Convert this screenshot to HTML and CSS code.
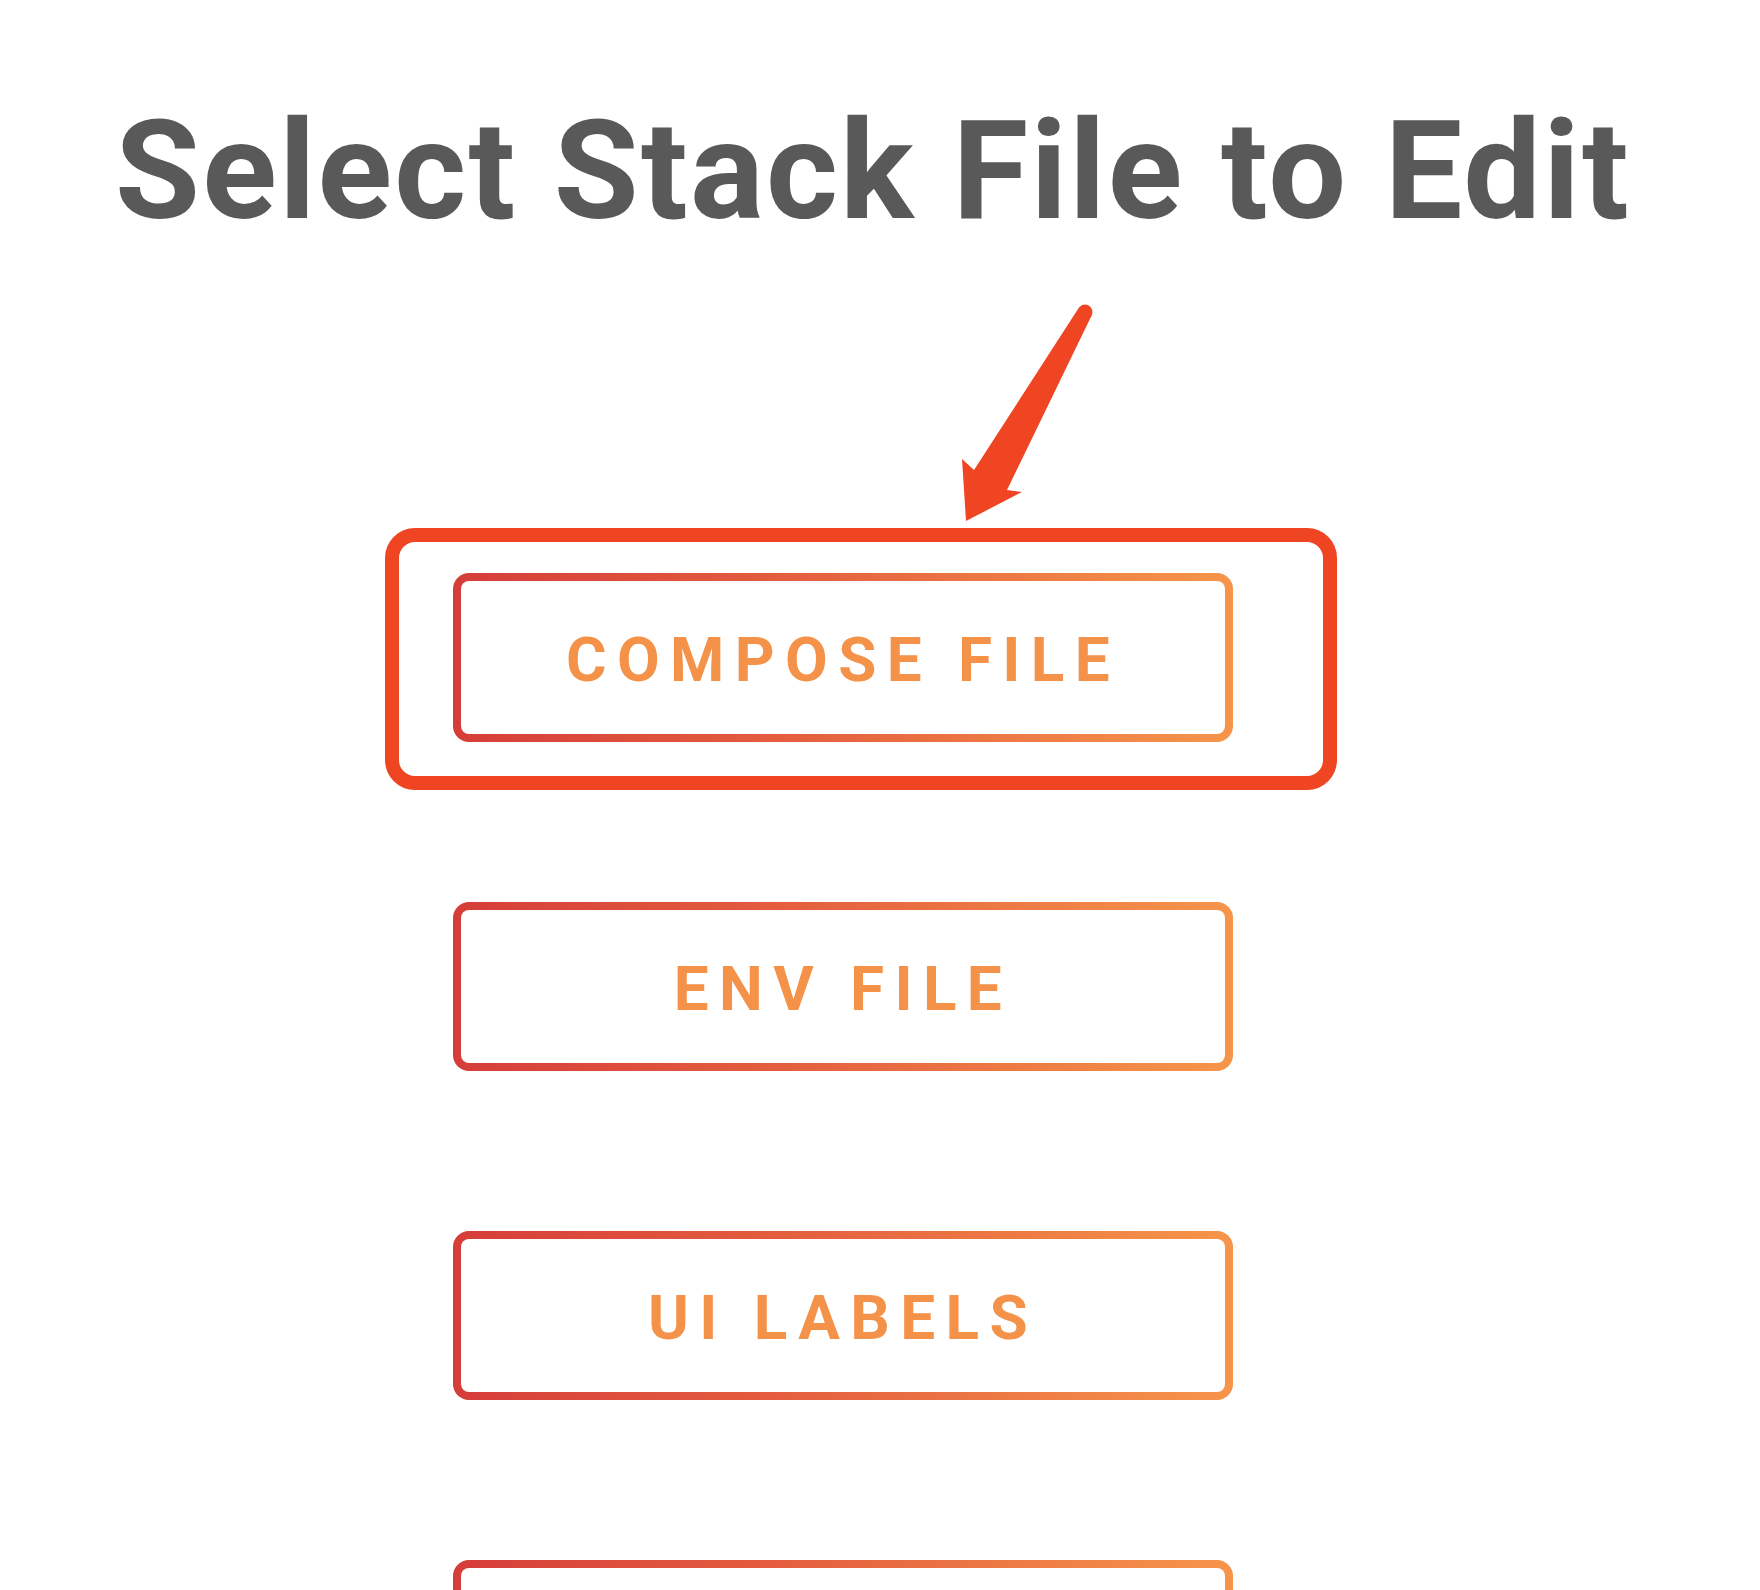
FILE: index.html
```html
<!DOCTYPE html>
<html lang="en">
<head>
<meta charset="utf-8">
<title>Select Stack File to Edit</title>
<link rel="stylesheet" href="styles.css">
</head>
<body>
<main class="page">
  <h1 class="title">Select Stack File to Edit</h1>
  <div class="list">
    <div class="item">
      <button class="file-btn" type="button">COMPOSE FILE</button>
      <div class="highlight"></div>
      <svg class="arrow" width="150" height="230" viewBox="0 0 150 230" aria-hidden="true">
        <circle cx="135" cy="12" r="7.5" fill="#f04523"/>
        <polygon fill="#f04523" points="16,221 12,159 24,170 128.5,8.3 141.5,15.7 57,190 72,192"/>
      </svg>
    </div>
    <button class="file-btn" type="button">ENV FILE</button>
    <button class="file-btn" type="button">UI LABELS</button>
    <button class="file-btn" type="button" aria-label="More"></button>
  </div>
</main>
</body>
</html>
```
FILE: styles.css
```css
html, body {
  margin: 0;
  padding: 0;
  background: #ffffff;
}

.page {
  height: 1590px;
  overflow: hidden;
  font-family: Roboto, "Liberation Sans", sans-serif;
}

.title {
  margin: 102px 0 0 0;
  padding-left: 115px;
  font-size: 138px;
  line-height: 1;
  font-weight: 700;
  letter-spacing: 2.2px;
  color: #595959;
  white-space: nowrap;
}

.list {
  margin-top: 333px;
  margin-left: 453px;
  width: 780px;
  display: flex;
  flex-direction: column;
  gap: 160px;
}

.item {
  position: relative;
}

.file-btn {
  box-sizing: border-box;
  width: 780px;
  height: 169px;
  display: flex;
  align-items: center;
  justify-content: center;
  padding: 5px 0 0 0;
  border: 8px solid transparent;
  border-radius: 16px;
  background:
    linear-gradient(#ffffff, #ffffff) padding-box,
    linear-gradient(90deg, #d53d39 0%, #e35c3e 40%, #f6954a 100%) border-box;
  font-family: Roboto, "Liberation Sans", sans-serif;
  font-size: 62px;
  line-height: 1;
  font-weight: 700;
  letter-spacing: 10.4px;
  color: #f4924a;
  cursor: pointer;
}

.highlight {
  position: absolute;
  left: -68px;
  top: -45px;
  width: 952px;
  height: 262px;
  box-sizing: border-box;
  border: 14px solid #f04523;
  border-radius: 30px;
  pointer-events: none;
}

.arrow {
  position: absolute;
  left: 497px;
  top: -273px;
  overflow: visible;
}
```
